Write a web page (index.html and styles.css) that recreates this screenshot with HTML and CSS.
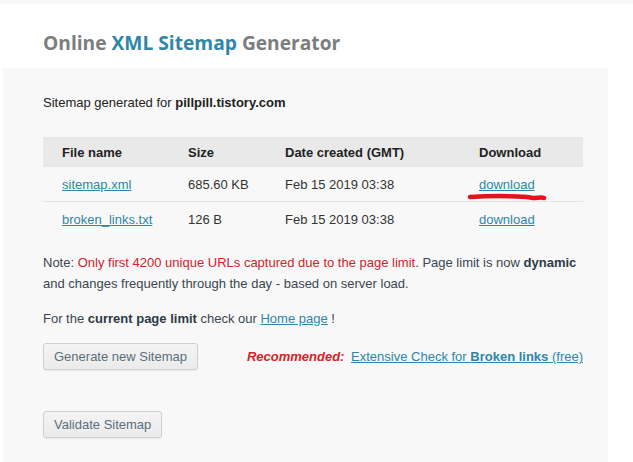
FILE: index.html
```html
<!doctype html>
<html lang="en">
<head>
  <meta charset="UTF-8" />
  <meta name="viewport" content="width=device-width, initial-scale=1" />
  <title>Online XML Sitemap Generator</title>
  <link rel="stylesheet" href="styles.css">
</head>
<body>
  <div class="topbar"></div>
  <h1 class="title">Online <span class="accent">XML Sitemap</span> Generator</h1>
  <div class="panel">
    <p class="generated">Sitemap generated for <b>pillpill.tistory.com</b></p>
    <table class="files">
      <colgroup>
        <col class="c-name"><col class="c-size"><col class="c-date"><col class="c-dl">
      </colgroup>
      <thead>
        <tr><th>File name</th><th>Size</th><th>Date created (GMT)</th><th>Download</th></tr>
      </thead>
      <tbody>
        <tr>
          <td><a href="#">sitemap.xml</a></td>
          <td>685.60 KB</td>
          <td>Feb 15 2019 03:38</td>
          <td class="dl"><a href="#">download</a>
            <svg class="mark" width="80" height="10" viewBox="0 0 80 10"><path d="M3 4 C 20 3, 45 3, 60 4 L 66 5 C 70 5, 75 4, 77 5" stroke="#e8101a" stroke-width="4.5" stroke-linecap="round" fill="none"/></svg>
          </td>
        </tr>
        <tr>
          <td><a href="#">broken_links.txt</a></td>
          <td>126 B</td>
          <td>Feb 15 2019 03:38</td>
          <td><a href="#">download</a></td>
        </tr>
      </tbody>
    </table>
    <p class="note">Note: <span class="warn">Only first 4200 unique URLs captured due to the page limit</span>. Page limit is now <b>dynamic</b> and changes frequently through the day - based on server load.</p>
    <p class="limit">For the <b>current page limit</b> check our <a href="#">Home page</a> !</p>
    <div class="actions">
      <button class="btn">Generate new Sitemap</button>
      <div class="recommend"><em>Recommended:</em> <a href="#">Extensive Check for <b>Broken links</b> </a><a href="#" class="free">(free)</a></div>
    </div>
    <button class="btn validate">Validate Sitemap</button>
  </div>
</body>
</html>
```
FILE: styles.css
```css
body {
  margin: 0;
  background: #fff;
  font-family: "Liberation Sans", Arial, sans-serif;
  font-size: 13px;
  color: #3a4650;
  width: 633px;
  height: 462px;
  overflow: hidden;
}
.topbar {
  height: 4px;
  background: #f8f8f8;
}
.title {
  margin: 0;
  padding: 25px 0 0 43px;
  height: 39px;
  font-family: "Open Sans", sans-serif;
  font-size: 19.2px;
  font-weight: 700;
  color: #7b7d7e;
  line-height: 28px;
}
.title .accent {
  color: #2f86a8;
}
.panel {
  margin-left: 3px;
  width: 565px;
  padding: 23px 0 0 40px;
  background: #f8f8f8;
  height: 371px;
}
.panel p {
  margin: 0;
}
.panel b {
  color: #2d3b45;
}
.generated {
  line-height: 24px;
  color: #222;
}
.generated b {
  color: #222;
}
a {
  color: #2f86a8;
}
.files {
  margin-top: 22px;
  border-collapse: collapse;
  table-layout: fixed;
  width: 540px;
}
.c-name { width: 145px; }
.c-size { width: 97px; }
.c-date { width: 194px; }
.c-dl { width: 104px; }
.files th {
  background: #e9e9e9;
  text-align: left;
  height: 30px;
  padding: 0;
  font-weight: 700;
  color: #222;
}
.files td {
  height: 34px;
  padding: 0;
  color: #333;
}
.files th:first-child,
.files td:first-child {
  padding-left: 19px;
}
.files tbody tr:first-child td {
  border-bottom: 1px solid #e4e4e4;
}
.dl {
  position: relative;
}
.mark {
  position: absolute;
  left: -12px;
  top: 26px;
}
.note {
  margin-top: 16px !important;
  line-height: 21px;
  width: 540px;
}
.warn {
  color: #d2232a;
}
.limit {
  margin-top: 14px !important;
  line-height: 21px;
}
.actions {
  margin-top: 14px;
  display: flex;
  align-items: center;
  width: 540px;
}
.btn {
  font-family: "Liberation Sans", Arial, sans-serif;
  font-size: 13px;
  color: #5a6e7c;
  background: linear-gradient(#f4f4f4, #ebebeb);
  border: 1px solid #cfcfcf;
  border-radius: 3px;
  height: 27px;
  padding: 0 10px;
  box-shadow: 0 1px 1px rgba(0, 0, 0, 0.06);
}
.recommend {
  margin-left: auto;
}
.recommend em {
  color: #d2232a;
  font-weight: 700;
  margin-right: 3px;
}
.recommend b {
  color: #2f86a8;
}
.validate {
  display: block;
  margin-top: 41px;
}
```
